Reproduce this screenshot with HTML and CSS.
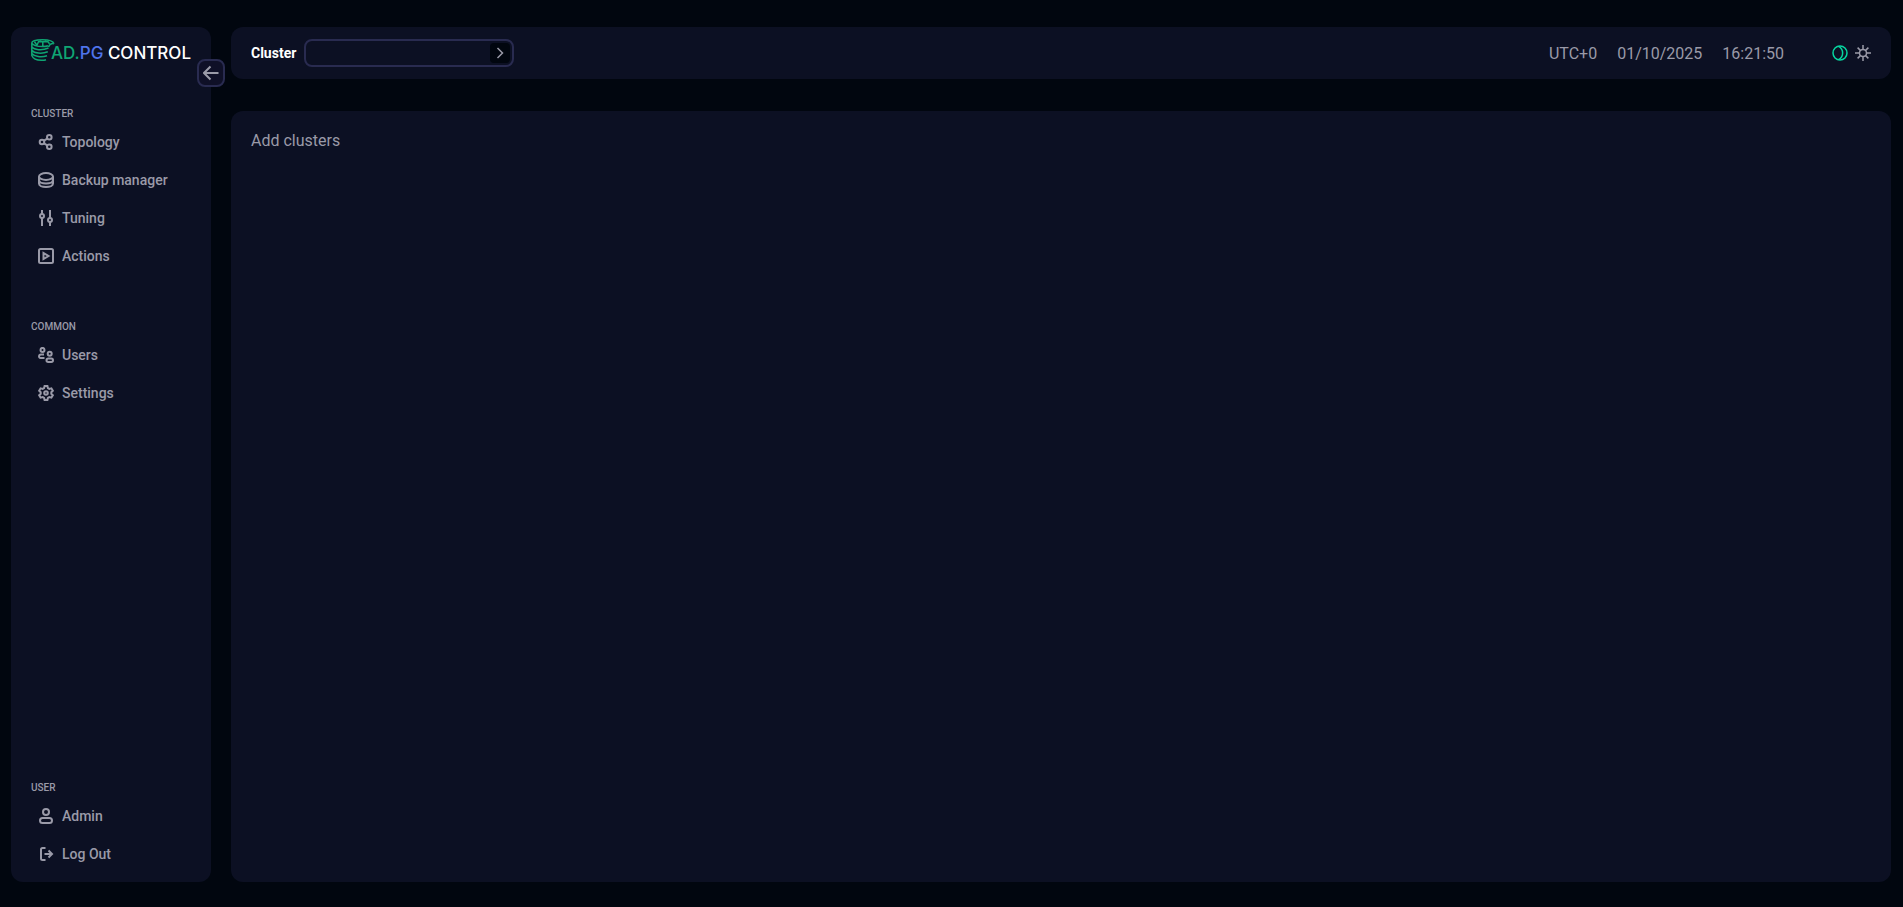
FILE: index.html
```html
<!DOCTYPE html>
<html lang="en">
<head>
  <meta charset="UTF-8">
  <meta name="viewport" content="width=device-width, initial-scale=1.0">
  <title>AD.PG Control</title>
  <link rel="stylesheet" href="styles.css">
</head>
<body>
  <aside class="sidebar">
    <a class="logo" href="#">
      <svg class="logo-mark" width="24" height="24" viewBox="0 0 24 24">
        <path d="M.8 5C.8 3 5.500 1.700 11.500 1.700c6 0 10.500.8 11.500 4M.8 5v12.500c1.200 3 5 4.800 9.700 4.800 2 0 3.500-.2 4.500-.6M.8 5C2 7.500 6.500 8.500 11.500 8.500c2.500 0 4-.2 5.500-.8M3.500 3.800 6 7.300M6 7.300l1.500-3.500h9.500l1.500 2M9.500 1.700V4M14.500 1.700V4M11.800 4v4M23 5.700c-2.500-.7-4.500.8-5.500 3.300M.8 8.800c2.500 3.200 10 4 16.700 1.200M.8 12.200c2.500 3.200 10 4 16 1.600M.8 15.500c2.500 3.200 9.500 4.200 15.200 2.300"/>
      </svg>
      <span class="logo-text"><span class="logo-ad">AD.</span><span class="logo-pg">PG</span> CONTROL</span>
    </a>
    <button class="collapse" type="button" aria-label="Collapse menu">
      <svg width="16" height="16" viewBox="0 0 16 16"><path d="M15.500 8H1M7.500 1.500 1 8l6.500 6.500"/></svg>
    </button>

    <nav class="menu">
      <section>
        <h2>CLUSTER</h2>
        <a href="#">
          <svg width="16" height="16" viewBox="0 0 16 16"><circle cx="4" cy="8" r="2.300"/><circle cx="11.300" cy="3.300" r="2.300"/><circle cx="11.300" cy="12.700" r="2.300"/><path d="m6 6.700 3.300-2.100M6 9.300l3.300 2.100"/></svg>
          Topology
        </a>
        <a href="#">
          <svg width="16" height="16" viewBox="0 0 16 16"><ellipse cx="8" cy="4.500" rx="7" ry="3.500"/><path d="M1 4.500v7C1 13.500 4 15 8 15s7-1.500 7-3.500v-7M1 8C1 10 4 11.500 8 11.500S15 10 15 8"/></svg>
          Backup manager
        </a>
        <a href="#">
          <svg width="16" height="16" viewBox="0 0 16 16"><path d="M4 0v4M4 8v8M12 0v8M12 12v4"/><circle cx="4" cy="6" r="2"/><circle cx="12" cy="10" r="2"/></svg>
          Tuning
        </a>
        <a href="#">
          <svg width="16" height="16" viewBox="0 0 16 16"><rect x="1" y="1" width="14" height="14" rx="1.500"/><path d="M5.500 5v6l5-3z"/></svg>
          Actions
        </a>
      </section>
      <section>
        <h2>COMMON</h2>
        <a href="#">
          <svg width="16" height="16" viewBox="0 0 16 16"><circle cx="4.500" cy="2.900" r="2"/><path d="M6.500 11H2.500C.5 11 .5 7.500 3 7.500h3"/><circle cx="11.700" cy="6.800" r="2"/><rect x="8.500" y="11.500" width="6.500" height="3.500" rx="1.700"/></svg>
          Users
        </a>
        <a href="#">
          <svg width="16" height="16" viewBox="0 0 16 16"><path d="M6.600 1h2.800l.5 2.100 1.400.8 2.100-.6 1.400 2.400L13.300 7.200v1.600l1.500 1.500-1.400 2.400-2.100-.6-1.400.8-.5 2.100H6.600l-.5-2.100-1.400-.8-2.100.6-1.400-2.400 1.500-1.500V7.200L1.200 5.700l1.400-2.400 2.100.6 1.400-.8z"/><circle cx="8" cy="8" r="1.800"/></svg>
          Settings
        </a>
      </section>
      <section class="account">
        <h2>USER</h2>
        <a href="#">
          <svg width="16" height="16" viewBox="0 0 16 16"><circle cx="8" cy="4" r="3"/><rect x="2" y="10" width="12" height="5" rx="2.500"/></svg>
          Admin
        </a>
        <a href="#">
          <svg width="16" height="16" viewBox="0 0 16 16"><path d="M7.500 2H4.500Q3 2 3 3.500v9Q3 14 4.500 14h3M6.500 8H14M10.500 4.500 14 8l-3.500 3.500"/></svg>
          Log Out
        </a>
      </section>
    </nav>
  </aside>

  <div class="page">
    <header class="topbar">
      <label for="cluster">Cluster</label>
      <div class="select">
        <select id="cluster">
          <option value=""></option>
        </select>
        <span class="select-arrow">
          <svg width="10" height="12" viewBox="0 0 10 12"><path d="m2.500 1 5 5-5 5"/></svg>
        </span>
      </div>
      <div class="clock">
        <span>UTC+0</span>
        <span>01/10/2025</span>
        <time>16:21:50</time>
      </div>
      <div class="theme">
        <button class="active" type="button" aria-label="Dark theme">
          <svg width="16" height="16" viewBox="0 0 16 16"><circle cx="8" cy="8" r="7"/><path d="M6.500 1.300c5.500 2.700 5.500 10.700 0 13.400"/></svg>
        </button>
        <button type="button" aria-label="Light theme">
          <svg width="16" height="16" viewBox="0 0 16 16"><circle cx="8" cy="8" r="3.500"/><path d="M8 0v4.500M8 11.500V16M0 8h4.500M11.500 8H16M2.600 2.600l2.800 2.800M10.600 10.600l2.800 2.800M2.600 13.400l2.800-2.800M10.600 5.400l2.800-2.800"/></svg>
        </button>
      </div>
    </header>

    <main class="content">
      <p>Add clusters</p>
    </main>
  </div>
</body>
</html>
```
FILE: styles.css
```css
* {
  box-sizing: border-box;
}

body {
  display: flex;
  gap: 20px;
  min-height: 100vh;
  margin: 0;
  padding: 27px 12px 25px 11px;
  background-color: #01060f;
  color: #9a9aa8;
  font-family: Roboto, sans-serif;
  font-size: 16px;
  line-height: 19px;
}

svg {
  flex: none;
  display: block;
  fill: none;
  stroke: currentColor;
  stroke-width: 2;
}

button {
  padding: 0;
  border: none;
  background: none;
  color: inherit;
  cursor: pointer;
}

.sidebar,
.topbar,
.content {
  background-color: #0c1023;
  border-radius: 12px;
}

.sidebar {
  position: relative;
  display: flex;
  flex-direction: column;
  flex: none;
  width: 200px;
  padding: 11px 20px 9px;
}

.logo {
  display: flex;
  height: 28px;
  color: #fff;
  text-decoration: none;
}

.logo-mark {
  margin-right: -4px;
  color: #0fa573;
  stroke-width: 1.5;
}

.logo-text {
  padding-top: 6px;
  font-family: Inter, sans-serif;
  font-size: 17px;
  font-weight: 500;
  white-space: nowrap;
}

.logo-ad {
  color: #0fa573;
}

.logo-pg {
  color: #4f74ec;
}

/* sits over the right edge of the sidebar */
.collapse {
  position: absolute;
  top: 32px;
  right: -14px;
  display: flex;
  align-items: center;
  justify-content: center;
  width: 28px;
  height: 28px;
  border: 2px solid #292b50;
  border-radius: 8px;
  background-color: #0f1027;
}

.menu {
  display: flex;
  flex: 1;
  flex-direction: column;
  gap: 43px;
  padding-top: 39px;
}

.menu h2 {
  margin: 0;
  font-size: 10px;
  font-weight: 500;
  line-height: 18px;
}

.menu a {
  display: flex;
  align-items: center;
  gap: 8px;
  height: 38px;
  padding-left: 7px;
  color: inherit;
  font-size: 14px;
  font-weight: 500;
  text-decoration: none;
}

.account {
  margin-top: auto;
}

.page {
  display: flex;
  flex: 1;
  flex-direction: column;
  gap: 32px;
}

.topbar {
  display: flex;
  align-items: center;
  height: 52px;
  padding: 0 20px;
}

.topbar label {
  margin-right: 8px;
  color: #fff;
  font-size: 14px;
  font-weight: 700;
}

.select {
  position: relative;
}

.select select {
  display: block;
  width: 210px;
  height: 28px;
  padding: 0 28px 0 8px;
  appearance: none;
  border: 2px solid #292b50;
  border-radius: 8px;
  background-color: #0c1023;
  color: inherit;
  font: inherit;
}

.select-arrow {
  position: absolute;
  top: 4px;
  right: 4px;
  display: flex;
  align-items: center;
  justify-content: center;
  width: 20px;
  height: 20px;
  border-radius: 4px;
  background-color: #01060f;
  pointer-events: none;
}

.select-arrow svg {
  stroke-width: 1.5;
}

.clock {
  display: flex;
  gap: 20px;
  margin-left: auto;
  padding-top: 1px;
}

.theme {
  display: flex;
  gap: 7px;
  margin-left: 48px;
}

.theme svg {
  stroke-width: 1.5;
}

.theme .active {
  color: #06d6a0;
}

.content {
  flex: 1;
  padding: 20px;
}

.content p {
  margin: 0;
}
```
